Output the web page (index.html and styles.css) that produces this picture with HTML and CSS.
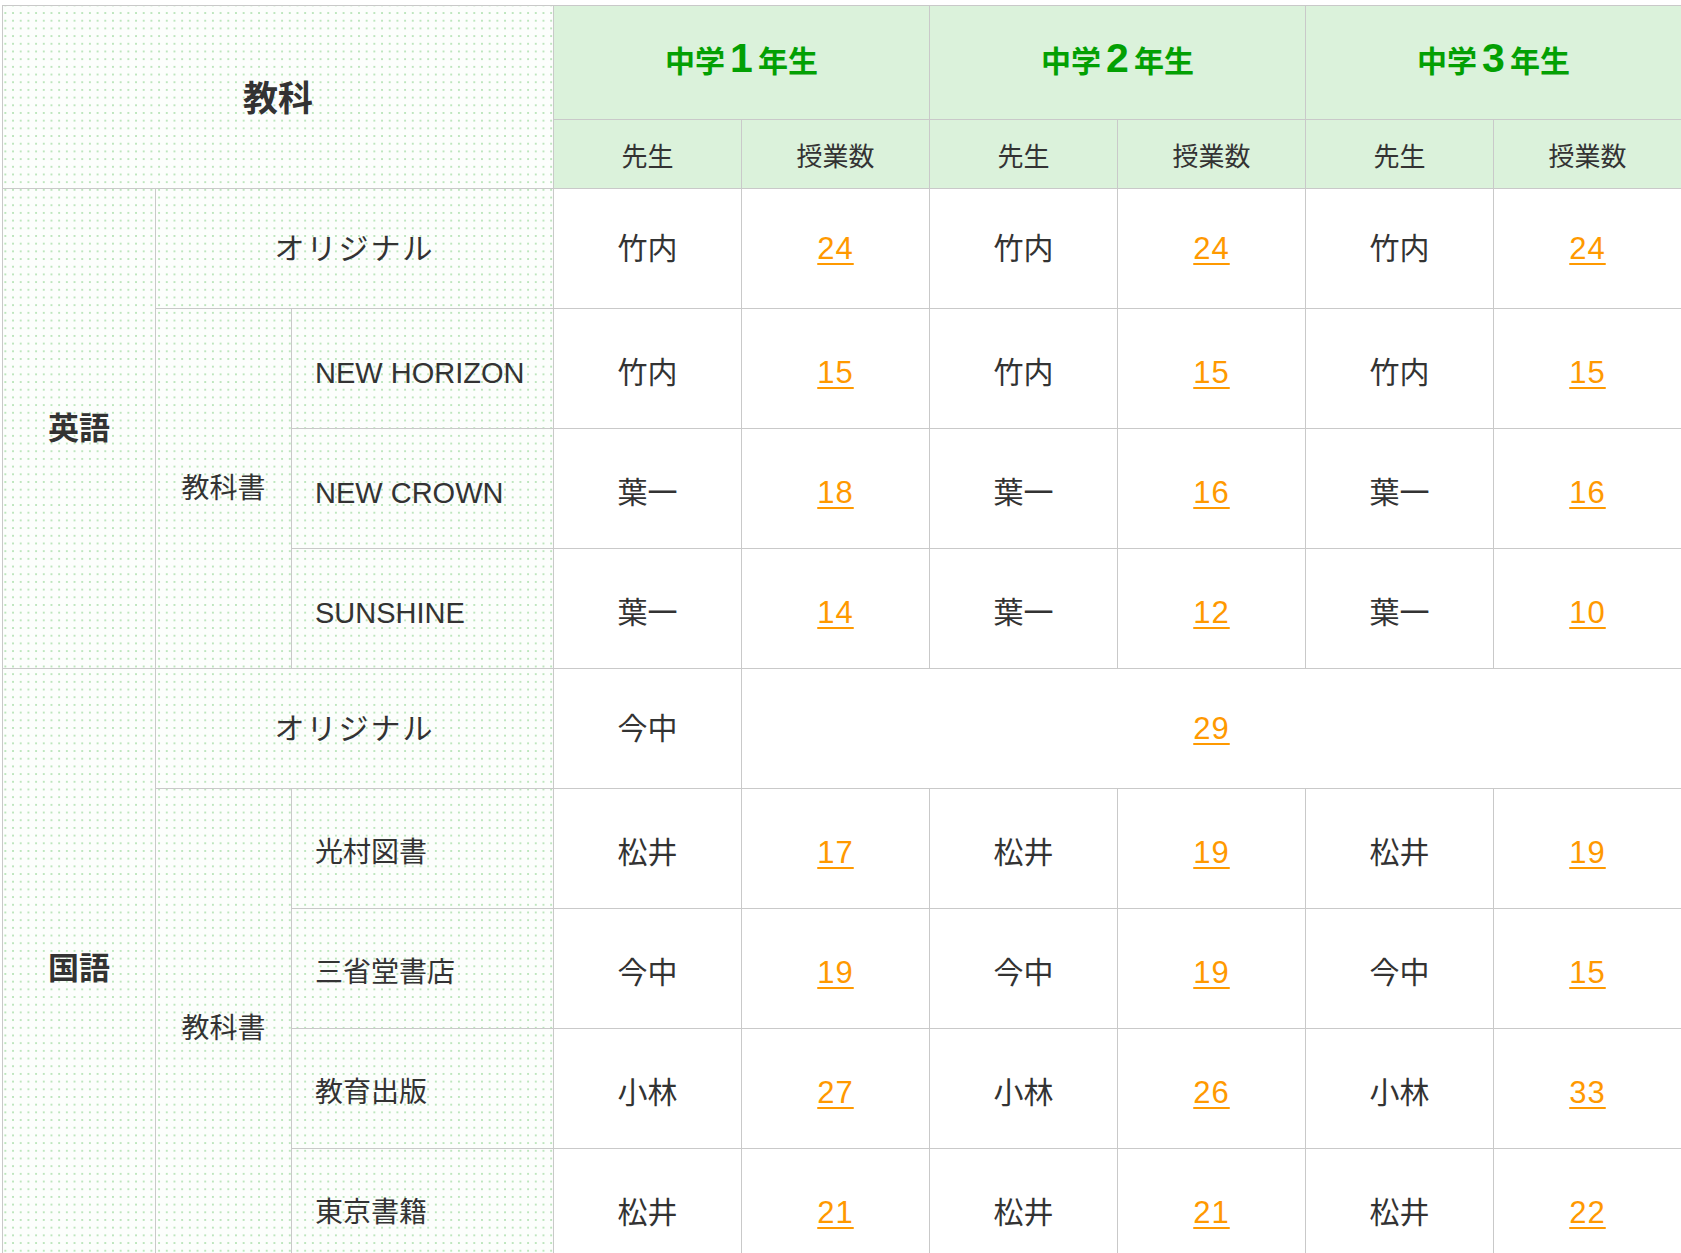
FILE: index.html
```html
<!DOCTYPE html>
<html lang="ja">
<head>
<meta charset="utf-8">
<title>授業数</title>
<link rel="stylesheet" href="styles.css">
</head>
<body>
<table class="lessons">
  <colgroup>
    <col class="c-subj"><col class="c-kind"><col class="c-book">
    <col class="c-num"><col class="c-num"><col class="c-num">
    <col class="c-num"><col class="c-num"><col class="c-num">
  </colgroup>
  <thead>
    <tr class="r-grade">
      <th class="dots head-label" rowspan="2" colspan="3">教科</th>
      <th class="grade" colspan="2">中学<span class="g-num">1</span>年生</th>
      <th class="grade" colspan="2">中学<span class="g-num">2</span>年生</th>
      <th class="grade" colspan="2">中学<span class="g-num">3</span>年生</th>
    </tr>
    <tr class="r-sub">
      <th class="sub">先生</th><th class="sub">授業数</th>
      <th class="sub">先生</th><th class="sub">授業数</th>
      <th class="sub">先生</th><th class="sub">授業数</th>
    </tr>
  </thead>
  <tbody>
    <tr>
      <th class="dots subj" rowspan="4">英語</th>
      <th class="dots orig" colspan="2">オリジナル</th>
      <td>竹内</td><td><a href="#">24</a></td>
      <td>竹内</td><td><a href="#">24</a></td>
      <td>竹内</td><td><a href="#">24</a></td>
    </tr>
    <tr class="r-book">
      <th class="dots kind" rowspan="3">教科書</th>
      <th class="dots book">NEW HORIZON</th>
      <td>竹内</td><td><a href="#">15</a></td>
      <td>竹内</td><td><a href="#">15</a></td>
      <td>竹内</td><td><a href="#">15</a></td>
    </tr>
    <tr class="r-book">
      <th class="dots book">NEW CROWN</th>
      <td>葉一</td><td><a href="#">18</a></td>
      <td>葉一</td><td><a href="#">16</a></td>
      <td>葉一</td><td><a href="#">16</a></td>
    </tr>
    <tr class="r-book">
      <th class="dots book">SUNSHINE</th>
      <td>葉一</td><td><a href="#">14</a></td>
      <td>葉一</td><td><a href="#">12</a></td>
      <td>葉一</td><td><a href="#">10</a></td>
    </tr>
    <tr>
      <th class="dots subj" rowspan="5">国語</th>
      <th class="dots orig" colspan="2">オリジナル</th>
      <td>今中</td><td colspan="5"><a href="#">29</a></td>
    </tr>
    <tr class="r-book">
      <th class="dots kind" rowspan="4">教科書</th>
      <th class="dots book book-ja">光村図書</th>
      <td>松井</td><td><a href="#">17</a></td>
      <td>松井</td><td><a href="#">19</a></td>
      <td>松井</td><td><a href="#">19</a></td>
    </tr>
    <tr class="r-book">
      <th class="dots book book-ja">三省堂書店</th>
      <td>今中</td><td><a href="#">19</a></td>
      <td>今中</td><td><a href="#">19</a></td>
      <td>今中</td><td><a href="#">15</a></td>
    </tr>
    <tr class="r-book">
      <th class="dots book book-ja">教育出版</th>
      <td>小林</td><td><a href="#">27</a></td>
      <td>小林</td><td><a href="#">26</a></td>
      <td>小林</td><td><a href="#">33</a></td>
    </tr>
    <tr class="r-book">
      <th class="dots book book-ja">東京書籍</th>
      <td>松井</td><td><a href="#">21</a></td>
      <td>松井</td><td><a href="#">21</a></td>
      <td>松井</td><td><a href="#">22</a></td>
    </tr>
  </tbody>
</table>
</body>
</html>
```
FILE: styles.css
```css
html, body {
  margin: 0;
  padding: 0;
  background: #ffffff;
}
body {
  padding: 5px 0 0 2px;
  font-family: "Liberation Sans", "Noto Sans CJK JP", sans-serif;
  color: #333333;
}
.lessons {
  border-collapse: collapse;
  table-layout: fixed;
  width: 1679px;
}
.c-subj { width: 153px; }
.c-kind { width: 136px; }
.c-book { width: 262px; }
.c-num { width: 188px; }

.lessons th,
.lessons td {
  border: 1px solid #c9c9c9;
  padding: 0;
  text-align: center;
  vertical-align: middle;
  font-size: 30px;
  font-weight: normal;
  line-height: 1.2;
}
.lessons tbody tr { height: 120px; }
.lessons tr.r-book > td,
.lessons tr.r-book > th.book {
  padding-top: 9px;
}

.dots {
  background-color: #fcfefc;
  background-image: radial-gradient(circle, #bde6bd 1px, rgba(255,255,255,0) 1.4px);
  background-size: 7.7px 7.7px;
  background-position: 1px 1px;
  background-attachment: fixed;
}

.r-grade { height: 114px; }
.r-sub { height: 69px; }

.lessons th.head-label {
  font-size: 35px;
  font-weight: bold;
  padding-top: 4px;
}
.lessons th.grade {
  background: #dbf2db;
  color: #03a003;
  font-size: 30px;
  font-weight: bold;
  line-height: 1;
  padding-bottom: 8px;
}
.g-num {
  font-size: 41px;
  line-height: 1;
  margin: 0 5px;
}
.lessons th.sub {
  background: #dbf2db;
  font-size: 26px;
  padding-top: 8px;
}
.lessons th.subj {
  font-size: 31px;
  font-weight: bold;
}
.orig {
  letter-spacing: 2px;
}
.lessons th.kind {
  font-size: 28px;
}
.lessons th.book {
  text-align: left;
  padding-left: 23px;
  font-size: 29px;
}
.lessons th.book-ja {
  font-size: 28px;
}
.lessons a {
  color: #ff9900;
  text-decoration: underline;
  text-decoration-thickness: 2px;
  text-underline-offset: 4px;
  font-size: 31px;
  letter-spacing: 1px;
}
```
